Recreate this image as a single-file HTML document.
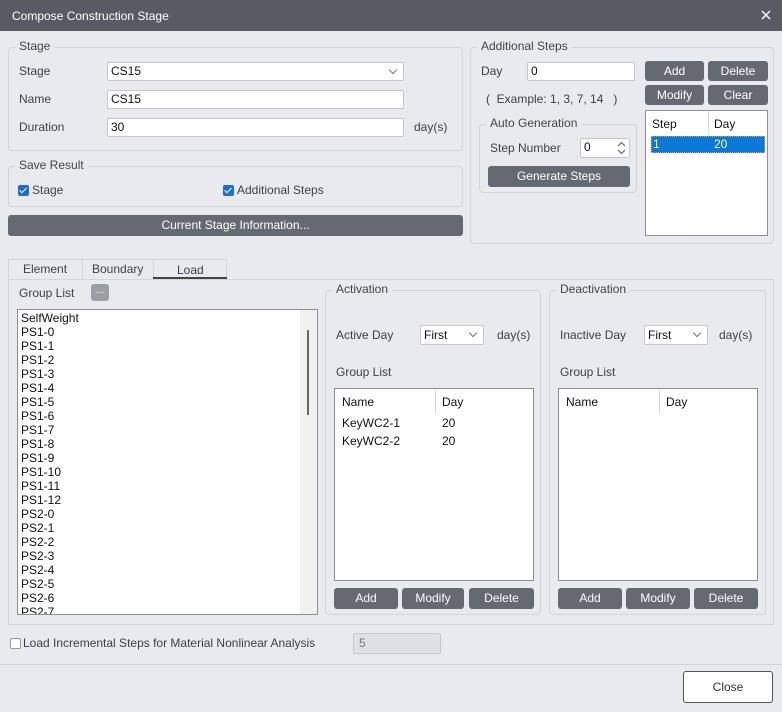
<!DOCTYPE html>
<html><head><style>
*{box-sizing:border-box;margin:0;padding:0}
body{width:782px;height:712px;background:#e9eaed;font-family:"Liberation Sans",sans-serif;font-size:12px;color:#3c4048;position:relative;overflow:hidden}
.a{position:absolute}
.grp{position:absolute;border:1px solid #d3d5d9;border-radius:4px}
.lg{position:absolute;background:#e9eaed;padding:0 4px;top:-9px;left:6px;color:#444}
.in{position:absolute;background:#fff;border:1px solid #c5c8cd;border-radius:2px;padding-left:3px;color:#111;line-height:17px}
.btn{position:absolute;background:#656a72;color:#fff;border-radius:3px;text-align:center;line-height:20px}
.chev{position:absolute;right:7px;top:4px;width:6px;height:6px;border-right:1.5px solid #777;border-bottom:1.5px solid #777;transform:rotate(45deg)}
.cb{position:absolute;width:11px;height:11px;background:#1f6fd1;border-radius:2px}
.cb:after{content:"";position:absolute;left:3px;top:1px;width:3px;height:6px;border-right:1.5px solid #fff;border-bottom:1.5px solid #fff;transform:rotate(45deg)}
.list{position:absolute;background:#fff;border:1px solid #8b8f96}
.t{position:absolute;white-space:nowrap}
</style></head><body>
<div class="a" style="left:0;top:0;width:782px;height:31px;background:#575c64"></div>
<div class="t" style="left:12px;top:9px;color:#fff">Compose Construction Stage</div>
<svg class="a" style="left:761px;top:10px" width="10" height="10"><path d="M1 1L9 9M9 1L1 9" stroke="#fff" stroke-width="1.4"/></svg>

<div class="grp" style="left:8px;top:47px;width:455px;height:104px"><span class="lg">Stage</span></div>
<div class="t" style="left:19px;top:64px">Stage</div>
<div class="in" style="left:107px;top:62px;width:297px;height:19px">CS15<span class="chev"></span></div>
<div class="t" style="left:19px;top:92px">Name</div>
<div class="in" style="left:107px;top:90px;width:297px;height:19px">CS15</div>
<div class="t" style="left:19px;top:120px">Duration</div>
<div class="in" style="left:107px;top:118px;width:297px;height:19px">30</div>
<div class="t" style="left:414px;top:120px">day(s)</div>

<div class="grp" style="left:8px;top:166px;width:455px;height:41px"><span class="lg">Save Result</span></div>
<div class="cb" style="left:18px;top:185px"></div><div class="t" style="left:32px;top:183px">Stage</div>
<div class="cb" style="left:223px;top:185px"></div><div class="t" style="left:237px;top:183px">Additional Steps</div>
<div class="btn" style="left:8px;top:215px;width:455px;height:21px">Current Stage Information...</div>

<div class="grp" style="left:470px;top:47px;width:304px;height:197px"><span class="lg">Additional Steps</span></div>
<div class="t" style="left:481px;top:64px">Day</div>
<div class="in" style="left:527px;top:62px;width:108px;height:19px">0</div>
<div class="t" style="left:486px;top:92px">(&nbsp; Example: 1, 3, 7, 14 &nbsp;&nbsp;)</div>
<div class="btn" style="left:645px;top:61px;width:59px;height:20px">Add</div>
<div class="btn" style="left:708px;top:61px;width:60px;height:20px">Delete</div>
<div class="btn" style="left:645px;top:85px;width:59px;height:20px">Modify</div>
<div class="btn" style="left:708px;top:85px;width:60px;height:20px">Clear</div>
<div class="grp" style="left:479px;top:124px;width:158px;height:69px"><span class="lg">Auto Generation</span></div>
<div class="t" style="left:490px;top:141px">Step Number</div>
<div class="in" style="left:580px;top:138px;width:50px;height:20px">0
<svg class="a" style="right:3px;top:2px" width="9" height="14"><path d="M1 5L4.5 1.5L8 5M1 9L4.5 12.5L8 9" stroke="#777" stroke-width="1.3" fill="none"/></svg></div>
<div class="btn" style="left:488px;top:166px;width:142px;height:21px">Generate Steps</div>
<div class="a" style="left:645px;top:110px;width:123px;height:126px;background:#fff;border:1px solid #8b8f96"></div>
<div class="a" style="left:708px;top:111px;width:1px;height:24px;background:#ddd"></div>
<div class="t" style="left:652px;top:117px;color:#111">Step</div>
<div class="t" style="left:714px;top:117px;color:#111">Day</div>
<div class="a" style="left:651px;top:136px;width:114px;height:17px;background:#0a78d7;border:1px dotted #f0a030"></div>
<div class="t" style="left:653px;top:137px;color:#fff">1</div>
<div class="t" style="left:714px;top:137px;color:#fff">20</div>

<div class="a" style="left:8px;top:279px;width:766px;height:346px;border:1px solid #d3d5d9"></div>
<div class="a" style="left:8px;top:259px;width:219px;height:21px;border:1px solid #d3d5d9;border-bottom:none"></div>
<div class="a" style="left:82px;top:259px;width:1px;height:20px;background:#d3d5d9"></div>
<div class="a" style="left:153px;top:259px;width:1px;height:20px;background:#d3d5d9"></div>
<div class="t" style="left:23px;top:262px">Element</div>
<div class="t" style="left:92px;top:262px">Boundary</div>
<div class="t" style="left:177px;top:263px">Load</div>
<div class="a" style="left:153px;top:277px;width:74px;height:2px;background:#444"></div>

<div class="t" style="left:19px;top:286px">Group List</div>
<div class="a" style="left:91px;top:284px;width:18px;height:17px;background:#9a9ea5;border-radius:3px;color:#fff;text-align:center;font-size:10px;line-height:14px">...</div>
<div class="list" style="left:17px;top:309px;width:301px;height:306px;overflow:hidden">
<div class="a" style="right:0;top:0;width:17px;height:304px;background:#f0f0f0"></div>
<div class="a" style="left:289px;top:20px;width:2px;height:85px;background:#666"></div>
<div class="a" style="left:3px;top:1px;line-height:14px;color:#111">SelfWeight<br>PS1-0<br>PS1-1<br>PS1-2<br>PS1-3<br>PS1-4<br>PS1-5<br>PS1-6<br>PS1-7<br>PS1-8<br>PS1-9<br>PS1-10<br>PS1-11<br>PS1-12<br>PS2-0<br>PS2-1<br>PS2-2<br>PS2-3<br>PS2-4<br>PS2-5<br>PS2-6<br>PS2-7</div>
</div>

<div class="grp" style="left:325px;top:290px;width:216px;height:325px"><span class="lg">Activation</span></div>
<div class="t" style="left:336px;top:328px">Active Day</div>
<div class="in" style="left:420px;top:325px;width:64px;height:20px;line-height:18px">First<span class="chev"></span></div>
<div class="t" style="left:497px;top:328px">day(s)</div>
<div class="t" style="left:336px;top:365px">Group List</div>
<div class="list" style="left:334px;top:388px;width:200px;height:193px"></div>
<div class="a" style="left:435px;top:390px;width:1px;height:24px;background:#ddd"></div>
<div class="t" style="left:342px;top:395px;color:#111">Name</div>
<div class="t" style="left:442px;top:395px;color:#111">Day</div>
<div class="t" style="left:342px;top:416px;color:#111">KeyWC2-1</div><div class="t" style="left:442px;top:416px;color:#111">20</div>
<div class="t" style="left:342px;top:434px;color:#111">KeyWC2-2</div><div class="t" style="left:442px;top:434px;color:#111">20</div>
<div class="btn" style="left:334px;top:588px;width:64px;height:21px">Add</div>
<div class="btn" style="left:402px;top:588px;width:62px;height:21px">Modify</div>
<div class="btn" style="left:469px;top:588px;width:65px;height:21px">Delete</div>

<div class="grp" style="left:549px;top:290px;width:217px;height:325px"><span class="lg">Deactivation</span></div>
<div class="t" style="left:560px;top:328px">Inactive Day</div>
<div class="in" style="left:644px;top:325px;width:64px;height:20px;line-height:18px">First<span class="chev"></span></div>
<div class="t" style="left:719px;top:328px">day(s)</div>
<div class="t" style="left:560px;top:365px">Group List</div>
<div class="list" style="left:558px;top:388px;width:200px;height:193px"></div>
<div class="a" style="left:659px;top:390px;width:1px;height:24px;background:#ddd"></div>
<div class="t" style="left:566px;top:395px;color:#111">Name</div>
<div class="t" style="left:666px;top:395px;color:#111">Day</div>
<div class="btn" style="left:558px;top:588px;width:64px;height:21px">Add</div>
<div class="btn" style="left:626px;top:588px;width:64px;height:21px">Modify</div>
<div class="btn" style="left:694px;top:588px;width:64px;height:21px">Delete</div>

<div class="a" style="left:10px;top:638px;width:11px;height:11px;background:#fff;border:1px solid #999;border-radius:2px"></div>
<div class="t" style="left:23px;top:636px">Load Incremental Steps for Material Nonlinear Analysis</div>
<div class="a" style="left:353px;top:633px;width:88px;height:21px;background:#dfe1e4;border:1px solid #c5c8cd;border-radius:2px;padding-left:5px;line-height:19px;color:#777">5</div>
<div class="a" style="left:0;top:664px;width:782px;height:1px;background:#cfd1d5"></div>
<div class="a" style="left:683px;top:671px;width:90px;height:32px;background:#fff;border:1px solid #555;border-radius:3px;text-align:center;line-height:30px;color:#333">Close</div>
</body></html>
